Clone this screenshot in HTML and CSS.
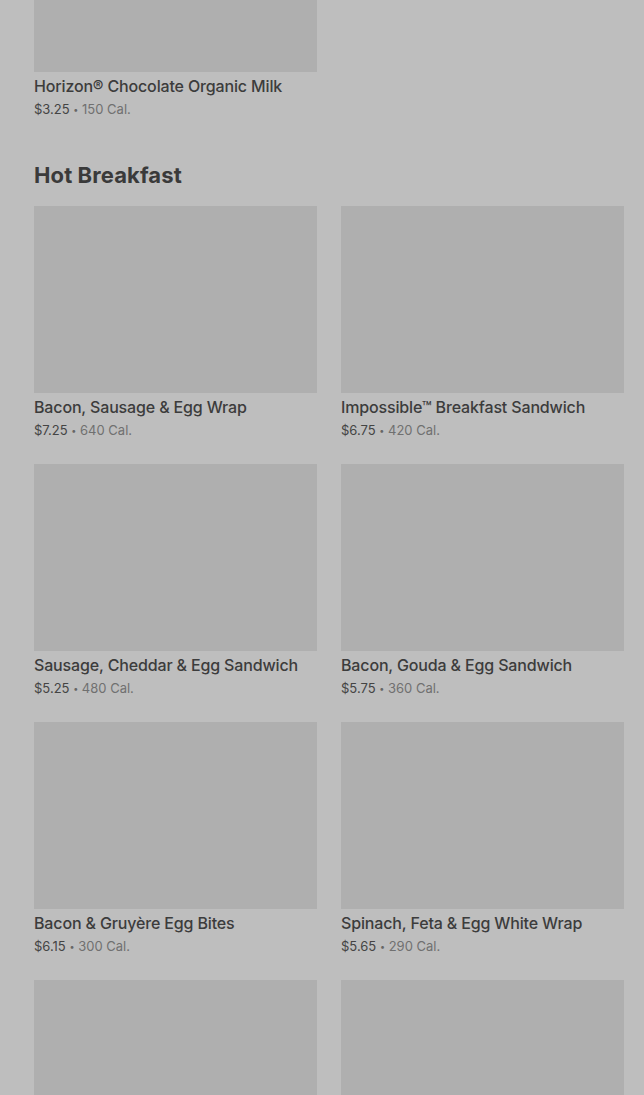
FILE: index.html
```html
<!DOCTYPE html>
<html lang="en">
<head>
  <meta charset="UTF-8">
  <meta name="viewport" content="width=device-width, initial-scale=1.0">
  <title>Menu</title>
  <link rel="stylesheet" href="styles.css">
</head>
<body>
  <div class="menu">
    <section class="menu-section menu-section-top">
      <div class="item-grid">
        <div class="item">
          <div class="item-image"></div>
          <div class="item-name">Horizon® Chocolate Organic Milk</div>
          <div class="item-meta"><span class="price">$3.25</span> <span class="dot">•</span> <span class="cal">150 Cal.</span></div>
        </div>
      </div>
    </section>

    <section class="menu-section">
      <h2>Hot Breakfast</h2>
      <div class="item-grid">
        <div class="item">
          <div class="item-image"></div>
          <div class="item-name">Bacon, Sausage &amp; Egg Wrap</div>
          <div class="item-meta"><span class="price">$7.25</span> <span class="dot">•</span> <span class="cal">640 Cal.</span></div>
        </div>
        <div class="item">
          <div class="item-image"></div>
          <div class="item-name">Impossible™ Breakfast Sandwich</div>
          <div class="item-meta"><span class="price">$6.75</span> <span class="dot">•</span> <span class="cal">420 Cal.</span></div>
        </div>
        <div class="item">
          <div class="item-image"></div>
          <div class="item-name">Sausage, Cheddar &amp; Egg Sandwich</div>
          <div class="item-meta"><span class="price">$5.25</span> <span class="dot">•</span> <span class="cal">480 Cal.</span></div>
        </div>
        <div class="item">
          <div class="item-image"></div>
          <div class="item-name">Bacon, Gouda &amp; Egg Sandwich</div>
          <div class="item-meta"><span class="price">$5.75</span> <span class="dot">•</span> <span class="cal">360 Cal.</span></div>
        </div>
        <div class="item">
          <div class="item-image"></div>
          <div class="item-name">Bacon &amp; Gruyère Egg Bites</div>
          <div class="item-meta"><span class="price">$6.15</span> <span class="dot">•</span> <span class="cal">300 Cal.</span></div>
        </div>
        <div class="item">
          <div class="item-image"></div>
          <div class="item-name">Spinach, Feta &amp; Egg White Wrap</div>
          <div class="item-meta"><span class="price">$5.65</span> <span class="dot">•</span> <span class="cal">290 Cal.</span></div>
        </div>
        <div class="item">
          <div class="item-image"></div>
        </div>
        <div class="item">
          <div class="item-image"></div>
        </div>
      </div>
    </section>
  </div>
</body>
</html>
```

FILE: styles.css
```css
/* General Reset */
* {
  margin: 0;
  padding: 0;
  box-sizing: border-box;
}

body {
  font-family: 'Inter', 'Liberation Sans', sans-serif;
  background-color: #bebebe;
  color: #3c3c3c;
  overflow: hidden;
}

.menu {
  padding: 0 20px 0 34px;
}

/* page is scrolled past the top of this section */
.menu-section-top {
  margin-top: -115px;
}

.menu-section h2 {
  font-size: 22px;
  line-height: 28px;
  font-weight: 700;
  color: #3a3a3a;
  margin-top: 42px;
  margin-bottom: 17px;
  letter-spacing: 0.1px;
}

.item-grid {
  display: grid;
  grid-template-columns: 1fr 1fr;
  column-gap: 24px;
  row-gap: 24px;
}

.item-image {
  height: 187px;
  background: #afafaf;
}

.item-name {
  margin-top: 4px;
  font-size: 16px;
  line-height: 20px;
  font-weight: 500;
  color: #3c3c3c;
  letter-spacing: -0.15px;
  white-space: nowrap;
}

.item-meta {
  margin-top: 3px;
  height: 20px;
  font-size: 13px;
  line-height: 20px;
  color: #444;
}

.item-meta .dot {
  font-size: 9px;
  line-height: 0;
  color: #666;
  vertical-align: 1px;
}

.item-meta .cal {
  color: #707070;
}
```
